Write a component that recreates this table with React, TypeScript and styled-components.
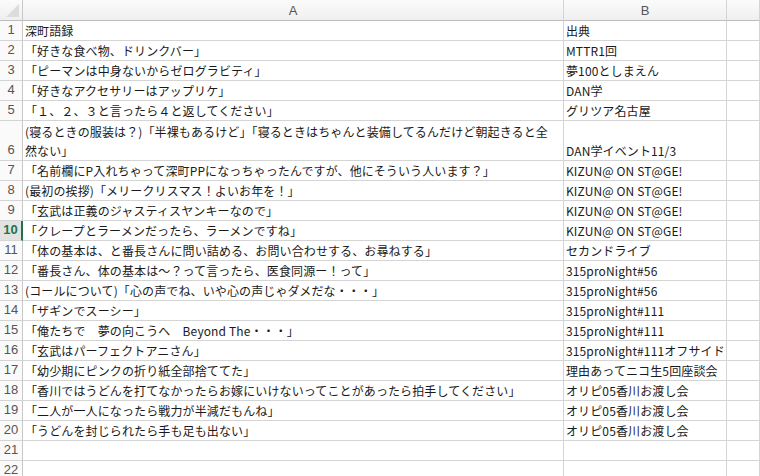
import React from 'react';
import styled, {createGlobalStyle} from 'styled-components';

const GlobalStyle = createGlobalStyle`
    html, body {
        margin: 0;
        padding: 0;
        background: #fff;
    }
`;

const Sheet = styled.div`
    width: 760px;
    height: 476px;
    overflow: hidden;
    display: grid;
    grid-template-columns: 23px 541px 163px 1fr;
    grid-auto-rows: auto;
    align-content: start;
    font-family: 'Noto Sans CJK JP', 'Noto Sans', sans-serif;
    font-size: 12px;
    letter-spacing: 0.12px;
    color: #1a1a1a;
    background: #fff;
`;

const Corner = styled.div`
    height: 21px;
    box-sizing: border-box;
    border-right: 1px solid #c8c8c8;
    border-bottom: 1px solid #bdbdbd;
    background: linear-gradient(#fbfbfb, #efefef);
    position: relative;

    &::after {
        content: '';
        position: absolute;
        right: 3px;
        bottom: 3px;
        border-style: solid;
        border-width: 0 0 13px 13px;
        border-color: transparent transparent #dcdcdc transparent;
    }
`;

const ColHead = styled.div`
    height: 21px;
    box-sizing: border-box;
    border-right: 1px solid #d4d4d4;
    border-bottom: 1px solid #bdbdbd;
    background: linear-gradient(#fbfbfb, #efefef);
    display: flex;
    align-items: center;
    justify-content: center;
    font-family: 'Liberation Sans', Arial, sans-serif;
    font-size: 13px;
    letter-spacing: 0;
    color: #555;
`;

const RowHead = styled.div<{$active?: boolean; $tall?: boolean}>`
    box-sizing: border-box;
    height: ${(p) => (p.$tall ? 40 : 20)}px;
    border-bottom: 1px solid #d4d4d4;
    border-right: ${(p) => (p.$active ? '2px solid #217346' : '1px solid #c8c8c8')};
    background: ${(p) => (p.$active ? '#e2e2e2' : '#fafafa')};
    display: flex;
    align-items: flex-end;
    justify-content: center;
    padding-bottom: 1px;
    font-family: 'Liberation Sans', Arial, sans-serif;
    font-size: 13px;
    letter-spacing: 0;
    line-height: 18px;
    color: ${(p) => (p.$active ? '#217346' : '#555')};
    font-weight: ${(p) => (p.$active ? 700 : 400)};
`;

const Cell = styled.div<{$tall?: boolean}>`
    box-sizing: border-box;
    height: ${(p) => (p.$tall ? 40 : 20)}px;
    border-bottom: 1px solid #d4d4d4;
    border-right: 1px solid #d4d4d4;
    padding: 0 2px;
    display: flex;
    align-items: flex-end;
    white-space: nowrap;
    line-height: 19px;
`;

const MultiLine = styled.div`
    display: flex;
    flex-direction: column;
`;

const CellText = styled.span`
    display: block;
`;

type Row = [string, string];

const rows: Row[] = [
    ['深町語録', '出典'],
    ['「好きな食べ物、ドリンクバー」', 'MTTR1回'],
    ['「ピーマンは中身ないからゼログラビティ」', '夢100としまえん'],
    ['「好きなアクセサリーはアップリケ」', 'DAN学'],
    ['「１、２、３と言ったら４と返してください」', 'グリツア名古屋'],
    [
        '(寝るときの服装は？)「半裸もあるけど」「寝るときはちゃんと装備してるんだけど朝起きると全\n然ない」',
        'DAN学イベント11/3'
    ],
    ['「名前欄にP入れちゃって深町PPになっちゃったんですが、他にそういう人います？」', 'KIZUN@ ON ST@GE!'],
    ['(最初の挨拶)「メリークリスマス！よいお年を！」', 'KIZUN@ ON ST@GE!'],
    ['「玄武は正義のジャスティスヤンキーなので」', 'KIZUN@ ON ST@GE!'],
    ['「クレープとラーメンだったら、ラーメンですね」', 'KIZUN@ ON ST@GE!'],
    ['「体の基本は、と番長さんに問い詰める、お問い合わせする、お尋ねする」', 'セカンドライブ'],
    ['「番長さん、体の基本は～？って言ったら、医食同源ー！って」', '315proNight#56'],
    ['(コールについて)「心の声でね、いや心の声じゃダメだな・・・」', '315proNight#56'],
    ['「ザギンでスーシー」', '315proNight#111'],
    ['「俺たちで　夢の向こうへ　Beyond The・・・」', '315proNight#111'],
    ['「玄武はパーフェクトアニさん」', '315proNight#111オフサイド'],
    ['「幼少期にピンクの折り紙全部捨ててた」', '理由あってニコ生5回座談会'],
    ['「香川ではうどんを打てなかったらお嫁にいけないってことがあったら拍手してください」', 'オリピ05香川お渡し会'],
    ['「二人が一人になったら戦力が半減だもんね」', 'オリピ05香川お渡し会'],
    ['「うどんを封じられたら手も足も出ない」', 'オリピ05香川お渡し会'],
    ['', ''],
    ['', '']
];

const renderText = (text: string) =>
    text.split('\n').map((line, index) => (
        <CellText key={index}>{line}</CellText>
    ));

const App = () => (
    <>
        <GlobalStyle />
        <Sheet>
            <Corner />
            <ColHead>A</ColHead>
            <ColHead>B</ColHead>
            <ColHead />
            {rows.map(([quote, source], index) => {
                const tall = quote.includes('\n');
                const number = index + 1;
                return (
                    <React.Fragment key={number}>
                        <RowHead $tall={tall} $active={number === 10}>
                            {number}
                        </RowHead>
                        <Cell $tall={tall}>
                            {tall ? <MultiLine>{renderText(quote)}</MultiLine> : quote}
                        </Cell>
                        <Cell $tall={tall}>{source}</Cell>
                        <Cell $tall={tall} />
                    </React.Fragment>
                );
            })}
        </Sheet>
    </>
);

export default App;
